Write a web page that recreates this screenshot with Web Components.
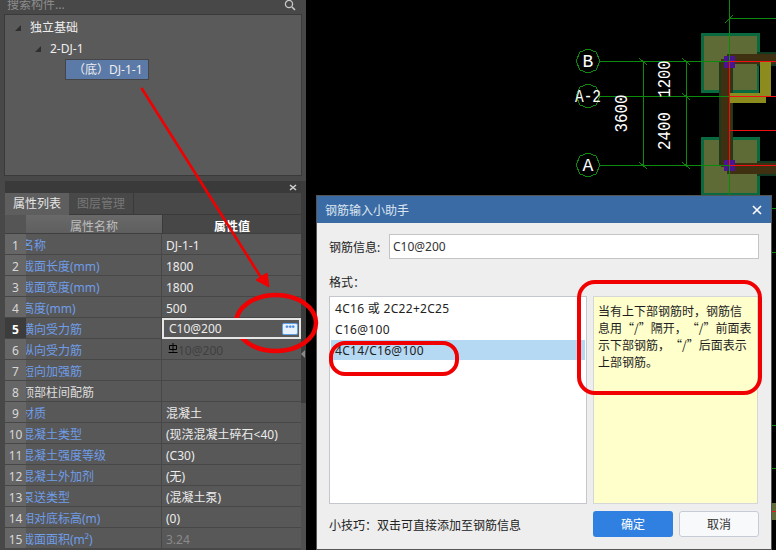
<!DOCTYPE html>
<html>
<head>
<meta charset="utf-8">
<style>
  html, body { margin: 0; padding: 0; background: #000; }
  body { width: 776px; height: 550px; overflow: hidden; position: relative; font-family: "Noto Sans", "Noto Sans CJK SC", sans-serif; font-size: 12px; text-spacing-trim: space-all; }
  .page { display: flex; width: 776px; height: 550px; }
</style>
</head>
<body>
<div class="page">
  <side-panel>
    <search-box slot="search" placeholder="搜索构件..."></search-box>
    <tree-node slot="tree" level="0" open>独立基础</tree-node>
    <tree-node slot="tree" level="1" open>2-DJ-1</tree-node>
    <tree-node slot="tree" level="2" selected>（底）DJ-1-1</tree-node>
    <prop-panel slot="props">
      <prop-row num="1" name="名称">DJ-1-1</prop-row>
      <prop-row num="2" name="截面长度(mm)">1800</prop-row>
      <prop-row num="3" name="截面宽度(mm)">1800</prop-row>
      <prop-row num="4" name="高度(mm)">500</prop-row>
      <prop-row num="5" name="横向受力筋" active>C10@200</prop-row>
      <prop-row num="6" name="纵向受力筋" dim>
        <svg width="10" height="12" viewBox="0 0 10 12" style="vertical-align:0;margin:0 0 0 2px"><path d="M1.500 2.500h7v4h-7zM5 0v8.500M0.500 9.500h9" fill="none" stroke="#000" stroke-width="1"/></svg>10@200
      </prop-row>
      <prop-row num="7" name="短向加强筋"></prop-row>
      <prop-row num="8" name="顶部柱间配筋" plain></prop-row>
      <prop-row num="9" name="材质">混凝土</prop-row>
      <prop-row num="10" name="混凝土类型">(现浇混凝土碎石&lt;40)</prop-row>
      <prop-row num="11" name="混凝土强度等级">(C30)</prop-row>
      <prop-row num="12" name="混凝土外加剂">(无)</prop-row>
      <prop-row num="13" name="泵送类型">(混凝土泵)</prop-row>
      <prop-row num="14" name="相对底标高(m)">(0)</prop-row>
      <prop-row num="15" name="截面面积(m²)" muted>3.24</prop-row>
    </prop-panel>
  </side-panel>
  <cad-canvas></cad-canvas>
</div>

<rebar-dialog heading="钢筋输入小助手" value="C10@200">
  <format-item>4C16 或 2C22+2C25</format-item>
  <format-item>C16@100</format-item>
  <format-item selected>4C14/C16@100</format-item>
  <span slot="help">当有上下部钢筋时，钢筋信<br>息用“/”隔开，“/”前面表<br>示下部钢筋，“/”后面表示<br>上部钢筋。</span>
</rebar-dialog>

<red-marks></red-marks>

<script>
class SidePanel extends HTMLElement {
  constructor() {
    super();
    this.attachShadow({ mode: 'open' });
    this.shadowRoot.innerHTML = `
      <style>
        :host { display: flex; flex-direction: column; width: 306px; height: 550px; flex: none; background: #484848; position: relative; }
        .tree { height: 158px; margin-left: 4px; padding-top: 2px; background: #5a5a5a; border: 1px solid #3a3a3a; width: 296px; flex: none; overflow: hidden; }
        .props { margin-top: 5px; flex: 1; min-height: 0; }
      </style>
      <slot name="search"></slot>
      <div class="tree"><slot name="tree"></slot></div>
      <div class="props"><slot name="props"></slot></div>
    `;
  }
}
customElements.define('side-panel', SidePanel);

class SearchBox extends HTMLElement {
  constructor() {
    super();
    this.attachShadow({ mode: 'open' });
    this.shadowRoot.innerHTML = `
      <style>
        :host { display: flex; justify-content: space-between; align-items: flex-start; height: 14px; padding: 0 9px 0 7px; overflow: hidden; color: #8d8d8d; flex: none; }
        span { line-height: 12px; margin-top: -1px; }
        svg { margin-right: 1px; }
      </style>
      <span></span>
      <svg width="12" height="11" viewBox="0 0 12 11"><circle cx="5" cy="4" r="3.600" fill="none" stroke="#c8c8c8" stroke-width="1.300"/><path d="M8 7l3 3" stroke="#c8c8c8" stroke-width="1.600"/></svg>
    `;
    this.shadowRoot.querySelector('span').textContent = this.getAttribute('placeholder');
  }
}
customElements.define('search-box', SearchBox);

class TreeNode extends HTMLElement {
  constructor() {
    super();
    this.attachShadow({ mode: 'open' });
    const level = Number(this.getAttribute('level'));
    this.shadowRoot.innerHTML = `
      <style>
        :host { display: flex; align-items: center; height: 21px; color: #eeeeee; box-sizing: border-box; }
        .arrow { width: 0; height: 0; border-style: solid; border-width: 0 0 6px 6px; border-color: transparent transparent #2e2e2e transparent; margin-right: 9px; }
        .label { line-height: 19px; white-space: nowrap; }
        :host([selected]) .label { background: #5b7aa8; border: 1px solid #454545; width: 84px; padding-left: 7px; box-sizing: border-box; height: 21px; }
      </style>
      ${this.hasAttribute('open') ? '<i class="arrow"></i>' : ''}
      <span class="label"><slot></slot></span>
    `;
    this.style.paddingLeft = [10, 30, 60][level] + 'px';
  }
}
customElements.define('tree-node', TreeNode);

class PropPanel extends HTMLElement {
  constructor() {
    super();
    this.attachShadow({ mode: 'open' });
    this.shadowRoot.innerHTML = `
      <style>
        :host { display: block; position: relative; height: 369px; }
        .bar { height: 12px; background: #3a3a3a; margin-left: 5px; width: 296px; display: flex; justify-content: flex-end; align-items: center; padding-right: 4px; box-sizing: border-box; }
        .bar svg { display: block; }
        .tabs { display: flex; height: 22px; margin-left: 5px; width: 296px; background: #484848; box-sizing: border-box; border-bottom: 1px solid #3a3a3a; }
        .tab { width: 65px; box-sizing: border-box; line-height: 21px; text-align: center; color: #777; border-right: 1px solid #3a3a3a; }
        .tab.on { width: 64px; background: #5e5e5e; color: #e6e6e6; border-right: 0; height: 22px; }
        .head { display: grid; grid-template-columns: 21px 136px 139px; height: 18px; margin-left: 5px; width: 296px; line-height: 23px; text-align: center; border-bottom: 1px solid #3f3f3f; overflow: hidden; }
        .head div:nth-child(1) { background: #555; }
        .head div:nth-child(2) { background: linear-gradient(#696969, #5c5c5c); color: #bdbdbd; }
        .head div:nth-child(3) { background: #474747; color: #fff; font-weight: 700; border-left: 1px solid #3a3a3a; }
        .rows { margin-left: 5px; width: 296px; }
        .scroll { position: absolute; left: 301px; top: 0; width: 5px; height: 369px; background: linear-gradient(#3c3c3c 222px, #505050 222px); }
        .scroll i { position: absolute; top: 169px; left: 0; border-style: solid; border-width: 4px 4px 4px 0; border-color: transparent #8a8a8a transparent transparent; }
      </style>
      <div class="bar"><svg width="8" height="7" viewBox="0 0 8 7"><path d="M1 1l6 5M7 1L1 6" stroke="#d0d0d0" stroke-width="1.600"/></svg></div>
      <div class="tabs"><div class="tab on">属性列表</div><div class="tab">图层管理</div></div>
      <div class="head"><div></div><div>属性名称</div><div>属性值</div></div>
      <div class="rows"><slot></slot></div>
      <div class="scroll"><i></i></div>
    `;
  }
}
customElements.define('prop-panel', PropPanel);

class PropRow extends HTMLElement {
  constructor() {
    super();
    this.attachShadow({ mode: 'open' });
    this.shadowRoot.innerHTML = `
      <style>
        :host { display: grid; grid-template-columns: 21px 136px 139px; height: 21px; box-sizing: border-box; background: #585858; border-bottom: 1px solid #474747; line-height: 24px; position: relative; }
        .num { background: #666; color: #d8d8d8; text-align: center; font-size: 12px; height: 20px; overflow: hidden; }
        :host([active]) .num { background: #3c3c3c; color: #fff; font-weight: 700; }
        .name { overflow: hidden; color: #6f9de8; white-space: nowrap; border-right: 1px solid #474747; }
        :host([plain]) .name { color: #dedede; }
        .name span { display: block; margin-left: -4px; }
        .val { color: #ececec; padding-left: 4px; white-space: nowrap; overflow: hidden; }
        :host([muted]) .val { color: #8a8a8a; }
        :host([dim]) .val { color: #404040; }
        :host([active]) .val { box-shadow: inset 0 0 0 2px #e6e6e6; padding-left: 7px; line-height: 21px; height: 21px; display: flex; justify-content: space-between; align-items: center; padding-right: 3px; background: #585858; z-index: 1; }
        .more { display: none; width: 16px; height: 12px; box-sizing: border-box; background: #e9f1fb; border: 1px solid #5f9fe4; border-radius: 2px; color: #4d8fdc; font: 700 9px/7px "Liberation Sans", sans-serif; text-align: center; }
        :host([active]) .more { display: block; }
      </style>
      <div class="num"></div>
      <div class="name"><span></span></div>
      <div class="val"><span><slot></slot></span><div class="more">•••</div></div>
    `;
    this.shadowRoot.querySelector('.num').textContent = this.getAttribute('num');
    this.shadowRoot.querySelector('.name span').textContent = this.getAttribute('name');
  }
}
customElements.define('prop-row', PropRow);

class CadCanvas extends HTMLElement {
  constructor() {
    super();
    this.attachShadow({ mode: 'open' });
    this.shadowRoot.innerHTML = `
      <style>
        :host { display: block; flex: 1; background: #000; }
        svg { display: block; }
        text { fill: #fff; font-family: "Liberation Mono", monospace; font-size: 18px; }
      </style>
      <svg width="470" height="550" viewBox="306 0 470 550" shape-rendering="crispEdges">
        <g fill="#5f6b36" stroke="#0a6a3f" stroke-width="3">
          <rect x="702" y="34" width="56" height="57"/>
          <rect x="702" y="138" width="56" height="56"/>
        </g>
        <rect x="759" y="60" width="17" height="45" fill="#000"/>
        <rect x="727" y="54" width="49" height="10" fill="#3e3010"/>
        <rect x="757" y="52" width="19" height="2" fill="#123a22"/>
        <rect x="757" y="64" width="19" height="2" fill="#123a22"/>
        <rect x="719" y="62" width="14" height="104" fill="#1c3a1c"/>
        <rect x="721" y="59" width="11" height="108" fill="#3e3010"/>
        <rect x="727" y="163" width="49" height="11" fill="#3e3010"/>
        <rect x="757" y="161" width="19" height="2" fill="#123a22"/>
        <rect x="757" y="174" width="19" height="2" fill="#123a22"/>
        <path d="M760 62h11v34h-5v7h-36v-10h30z" fill="#8c8c1e"/>
        <rect x="724" y="56" width="11" height="12" fill="#4a1490"/>
        <rect x="724" y="160" width="11" height="11" fill="#4a1490"/>

        <g fill="none" stroke="#0c8a0c" stroke-width="1">
          <polygon points="588,49 596,52 600,61 596,70 588,73 580,70 576,61 580,52"/>
          <polygon points="588,84 596,87 600,96 596,105 588,108 580,105 576,96 580,87"/>
          <polygon points="588,153 596,156 600,165 596,174 588,177 580,174 576,165 580,156"/>
          <path d="M600 61.500H729M600 96.500H729M600 165.500H729M643.500 61V165M686.500 61V165M729.500 0V61M729.500 165V196M730 18.500H776"/>
          <path d="M639 58l8 7M682 58l8 7M682 93l8 7M639 162l8 7M682 162l8 7M725 23l8-8"/>
        </g>
        <path d="M729.500 61V165M730 61.500H776M730 96.500H776M730 130.500H776M730 165.500H776" fill="none" stroke="#f01010"/>
        <path d="M771 208.500h5M771 252.500h5M771 425.500h5M771 468.500h5" stroke="#0c8a0c"/>
        <rect x="771" y="503" width="5" height="17" fill="#5f6b36"/>
        <path d="M771 511.500h5" stroke="#f01010"/>

        <g shape-rendering="auto" text-anchor="middle">
          <text x="588" y="67">B</text>
          <text x="588" y="171">A</text>
          <text x="588" y="102" textLength="26" lengthAdjust="spacingAndGlyphs">A-2</text>
          <text transform="translate(627 113.500) rotate(-90)" textLength="38" lengthAdjust="spacingAndGlyphs">3600</text>
          <text transform="translate(670 79) rotate(-90)" textLength="37" lengthAdjust="spacingAndGlyphs">1200</text>
          <text transform="translate(670 131) rotate(-90)" textLength="38" lengthAdjust="spacingAndGlyphs">2400</text>
        </g>
      </svg>
    `;
  }
}
customElements.define('cad-canvas', CadCanvas);

class RebarDialog extends HTMLElement {
  constructor() {
    super();
    this.attachShadow({ mode: 'open' });
    this.shadowRoot.innerHTML = `
      <style>
        :host { display: flex; flex-direction: column; position: absolute; left: 317px; top: 196px; width: 454px; height: 353px; background: #eeeeee; color: #222; box-shadow: 0 0 0 1px #555; }
        header { display: flex; justify-content: space-between; align-items: center; height: 27px; background: #3a6ba5; color: #dde6f0; padding: 0 8px; flex: none; }
        header svg { display: block; }
        .body { flex: 1; display: flex; flex-direction: column; padding: 11px 12px 12px 12px; }
        .info { display: flex; align-items: center; gap: 9px; height: 25px; }
        .info span { white-space: nowrap; flex: none; width: 51px; }
        .input { width: 370px; height: 25px; box-sizing: border-box; background: #fff; border: 1px solid #c4c4c4; padding-left: 3px; line-height: 23px; color: #333; font-size: 12px; }
        .label { margin-top: 15px; height: 16px; line-height: 16px; font-family: "Noto Sans CJK SC", sans-serif; }
        .panes { display: flex; gap: 6px; margin-top: 6px; height: 208px; }
        .list { width: 258px; box-sizing: border-box; background: #fff; border: 1px solid #c4c8ce; padding: 1px; }
        .help { width: 165px; box-sizing: border-box; background: #ffffcc; border: 1px solid #d4d6d8; padding: 5px 4px; line-height: 17px; color: #1d1d1d; white-space: nowrap; font-family: "Noto Sans CJK SC", sans-serif; }
        footer { display: flex; align-items: center; margin-top: 7px; height: 26px; }
        .tip { width: 264px; font-family: "Noto Sans CJK SC", sans-serif; }
        button { font: inherit; width: 80px; height: 26px; box-sizing: border-box; border-radius: 3px; padding: 0; }
        .ok { background: #2f80e0; border: 0; color: #fff; margin-right: 6px; }
        .no { background: #f8f9fa; border: 1px solid #c6ccd6; color: #333; }
      </style>
      <header>
        <span></span>
        <svg width="10" height="10" viewBox="0 0 10 10" style="margin-right:1px"><path d="M1 1l8 8M9 1L1 9" stroke="#fff" stroke-width="1.600"/></svg>
      </header>
      <div class="body">
        <div class="info"><span>钢筋信息:</span><div class="input"></div></div>
        <div class="label">格式：</div>
        <div class="panes">
          <div class="list"><slot></slot></div>
          <div class="help"><slot name="help"></slot></div>
        </div>
        <footer>
          <div class="tip">小技巧：双击可直接添加至钢筋信息</div>
          <button class="ok">确定</button>
          <button class="no">取消</button>
        </footer>
      </div>
    `;
    this.shadowRoot.querySelector('header span').textContent = this.getAttribute('heading');
    this.shadowRoot.querySelector('.input').textContent = this.getAttribute('value');
  }
}
customElements.define('rebar-dialog', RebarDialog);

class FormatItem extends HTMLElement {
  constructor() {
    super();
    this.attachShadow({ mode: 'open' });
    this.shadowRoot.innerHTML = `
      <style>
        :host { display: block; height: 21px; line-height: 22px; padding-left: 4px; color: #222; letter-spacing: .3px; }
        :host([selected]) { background: linear-gradient(#b5d9f3 20px, transparent 20px); }
      </style>
      <slot></slot>
    `;
  }
}
customElements.define('format-item', FormatItem);

class RedMarks extends HTMLElement {
  constructor() {
    super();
    this.attachShadow({ mode: 'open' });
    this.shadowRoot.innerHTML = `
      <style>
        :host { display: block; position: absolute; left: 0; top: 0; width: 776px; height: 550px; pointer-events: none; }
        svg { display: block; }
      </style>
      <svg width="776" height="550" viewBox="0 0 776 550" fill="none" stroke="#f00000">
        <path d="M141.500 88L262 279" stroke-width="2.600"/>
        <path d="M269 287L256 280L267 273Z" fill="#f00000" stroke-width="1"/>
        <ellipse cx="276" cy="323" rx="40" ry="28" stroke-width="4.500"/>
        <rect x="331" y="343" width="126" height="31" rx="14" stroke-width="4"/>
        <rect x="579" y="282" width="181" height="111" rx="16" stroke-width="4"/>
      </svg>
    `;
  }
}
customElements.define('red-marks', RedMarks);
</script>
</body>
</html>
